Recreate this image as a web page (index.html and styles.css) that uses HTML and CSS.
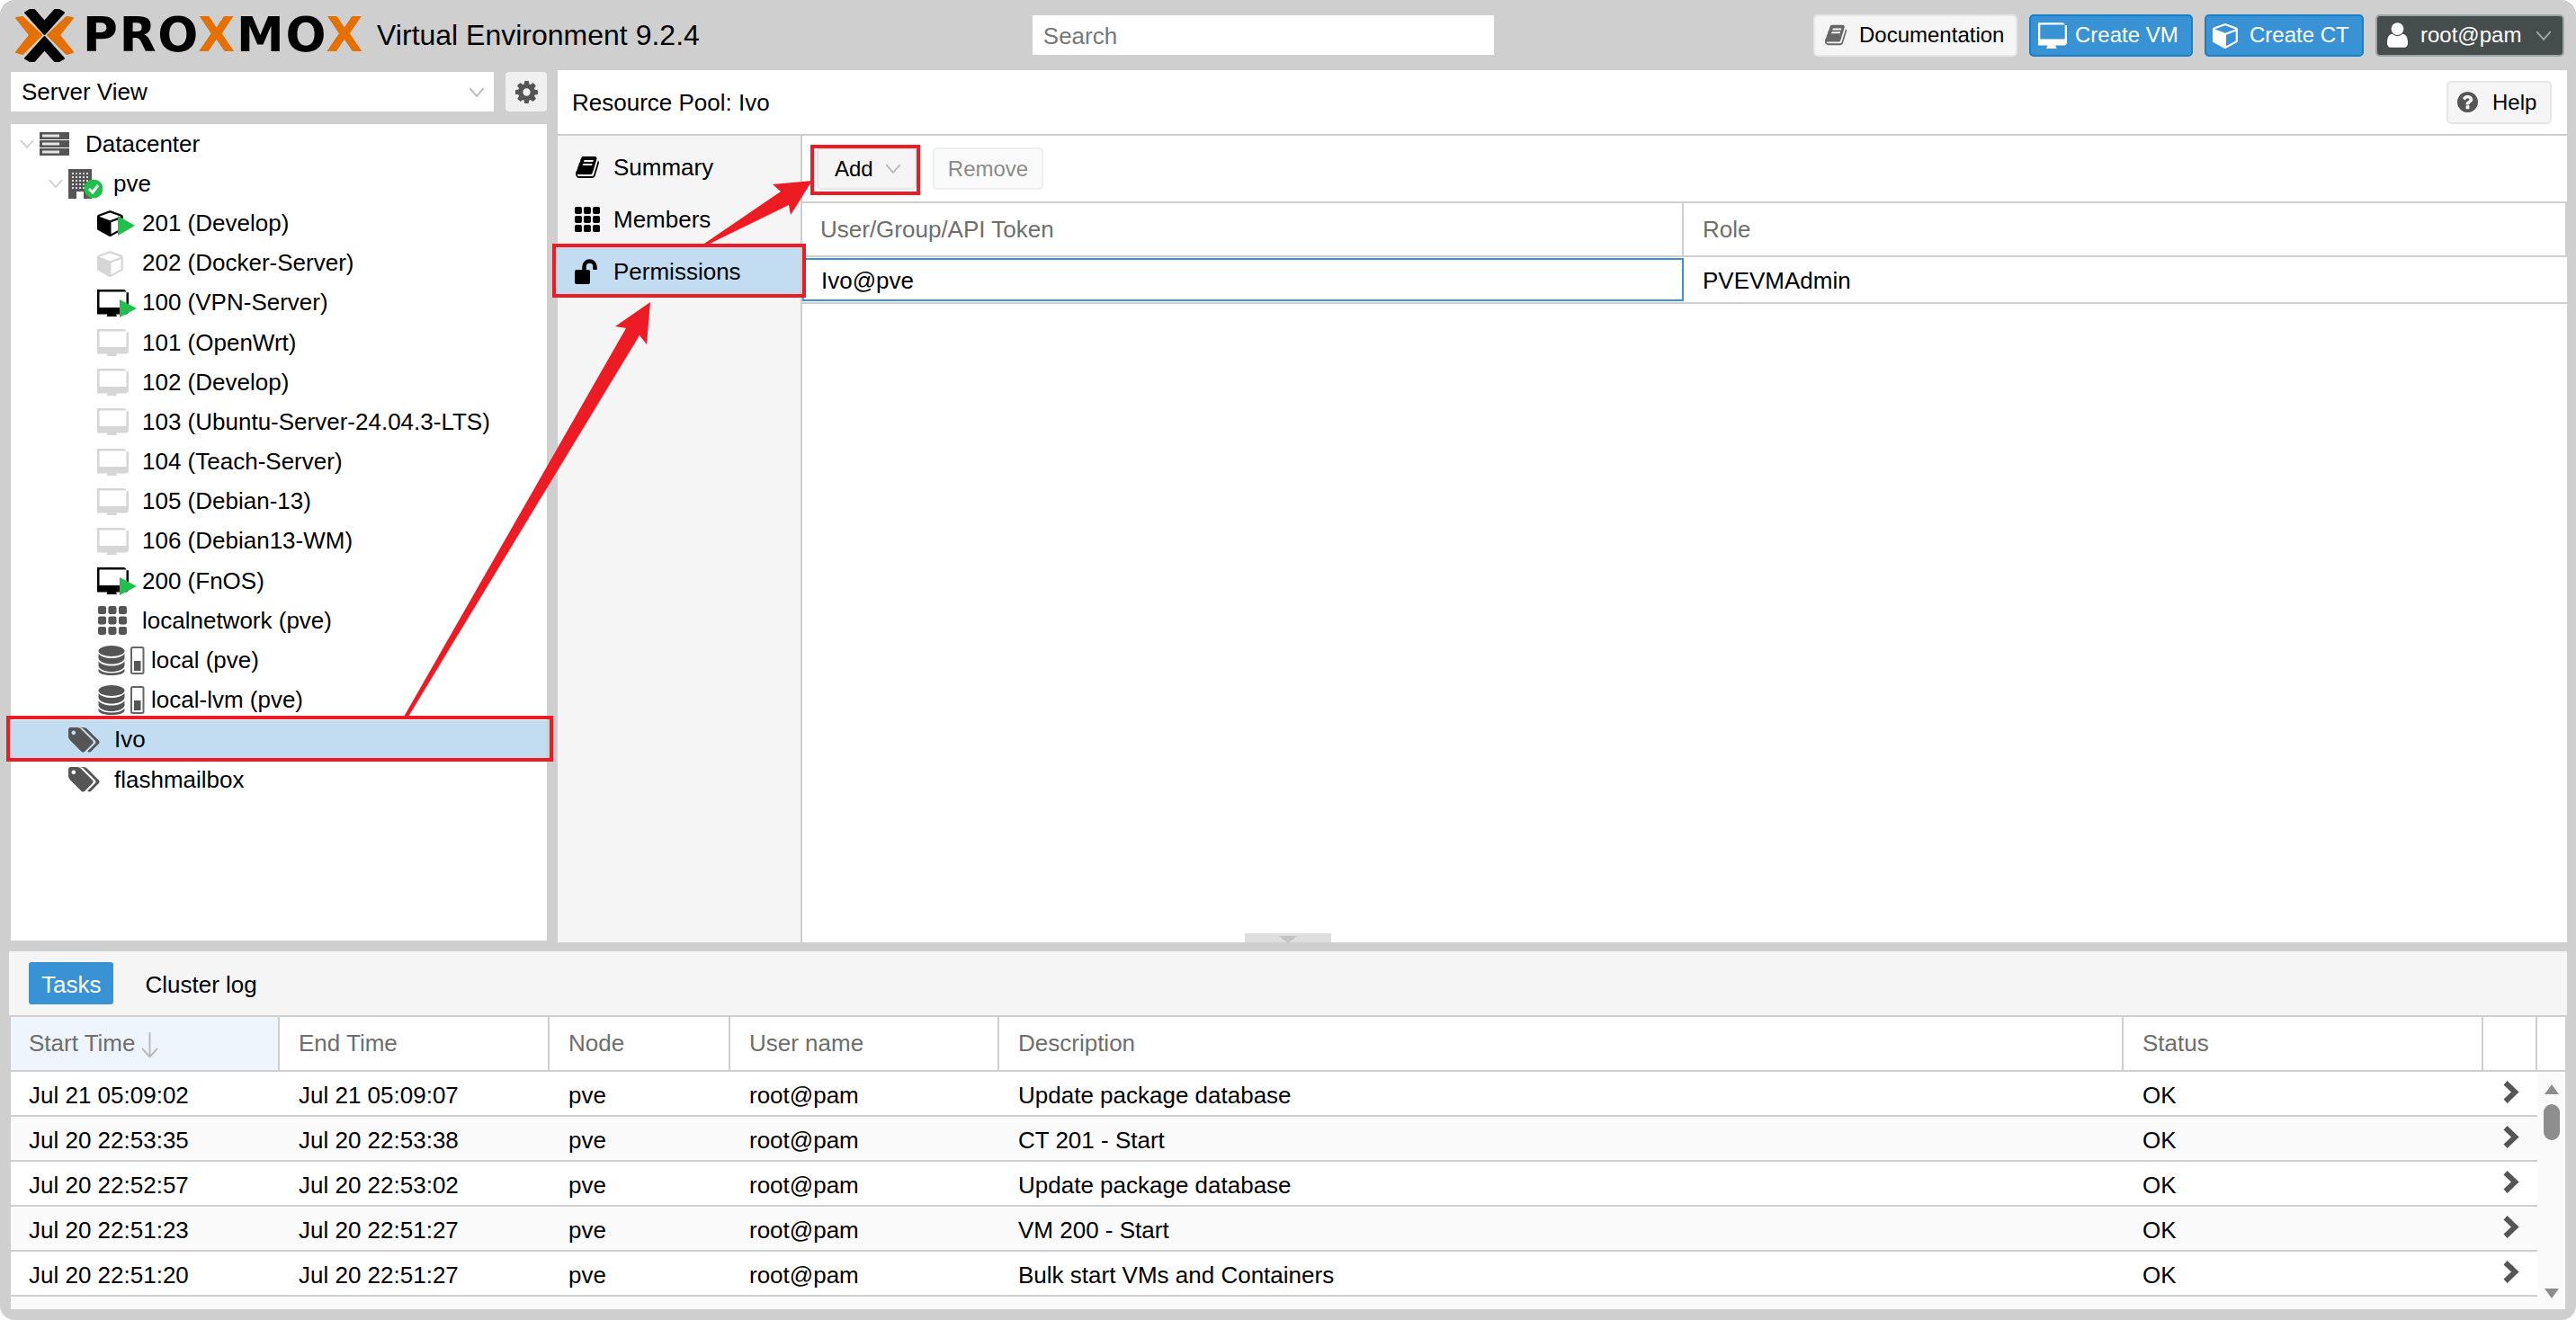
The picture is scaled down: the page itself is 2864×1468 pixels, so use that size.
FILE: index.html
```html
<!DOCTYPE html>
<html lang="en">
  <head>
    <meta charset="UTF-8" />
    <title>pve - Proxmox Virtual Environment</title>
    <link rel="stylesheet" href="styles.css">
  </head>
  <body>
    <!-- Shared icons -->
    <svg class="defs" width="0" height="0">
      <defs>
        <symbol id="i-cube" viewBox="0 0 1792 1792"><path fill="currentColor" d="M896 1629l640-349v-636l-640 233v752zm-64-865l698-254-698-254-698 254zm832-252v768q0 35-18 65t-49 47l-704 384q-28 16-61 16t-61-16l-704-384q-31-17-49-47t-18-65v-768q0-40 23-73t61-47l704-256q22-8 44-8t44 8l704 256q38 14 61 47t23 73z"/></symbol>
        <symbol id="i-desktop" viewBox="0 128 1792 1536"><path fill="currentColor" d="M1664 1120v-832q0-13-9.5-22.5t-22.5-9.5h-1472q-13 0-22.5 9.5t-9.5 22.5v832q0 13 9.5 22.5t22.5 9.5h1472q13 0 22.5-9.5t9.5-22.5zm128-832v1088q0 66-47 113t-113 47h-544q0 37 16 77.5t32 71 16 43.5q0 26-19 45t-45 19h-512q-26 0-45-19t-19-45q0-14 16-44t32-70 16-78h-544q-66 0-113-47t-47-113v-1088q0-66 47-113t113-47h1472q66 0 113 47t47 113z"/></symbol>
        <symbol id="i-book" viewBox="0 128 1792 1536"><path fill="currentColor" d="M1703 478q40 57 18 129l-275 906q-19 64-76.5 107.5t-122.5 43.5h-923q-77 0-148.5-53.5t-99.5-131.5q-24-67-2-127 0-4 3-27t4-37q1-8-3-21.5t-3-19.5q2-11 8-21t16.5-23.5 16.5-23.5q23-38 45-91.5t30-91.5q3-10 .5-30t-.5-28q3-11 17-28t17-23q21-36 42-92t25-90q1-9-2.5-32t.5-28q4-13 22-30.5t22-22.5q19-26 42.5-84.5t27.5-96.5q1-8-3-25.5t-2-26.5q2-8 9-18t18-23 17-21q8-12 16.5-30.5t15-35 16-36 19.5-32 26.5-23.5 36-11.5 47.5 5.5l-1 3q38-9 51-9h761q74 0 114 56t18 130l-274 906q-36 119-71.5 153.5t-128.5 34.5h-869q-27 0-38 15-11 16-1 43 24 70 144 70h923q29 0 56-15.5t35-41.5l300-987q7-22 5-57 38 15 59 43zm-1064 2q-4 13 2 22.5t20 9.5h608q13 0 25.5-9.5t16.5-22.5l21-64q4-13-2-22.5t-20-9.5h-608q-13 0-25.5 9.5t-16.5 22.5zm-83 256q-4 13 2 22.5t20 9.5h608q13 0 25.5-9.5t16.5-22.5l21-64q4-13-2-22.5t-20-9.5h-608q-13 0-25.5 9.5t-16.5 22.5z"/></symbol>
        <symbol id="i-tags" viewBox="0 128 1920 1536"><path fill="currentColor" d="M448 448q0-53-37.5-90.5t-90.5-37.5-90.5 37.5-37.5 90.5 37.5 90.5 90.5 37.5 90.5-37.5 37.5-90.5zm1067 576q0 53-37 90l-491 492q-39 37-91 37-53 0-90-37l-715-716q-38-37-64.5-101t-26.5-117v-416q0-52 38-90t90-38h416q53 0 117 26.5t102 64.5l715 714q37 39 37 91zm384 0q0 53-37 90l-491 492q-39 37-91 37-36 0-59-14t-53-45l470-470q37-37 37-90 0-52-37-91l-715-714q-38-38-102-64.5t-117-26.5h224q53 0 117 26.5t102 64.5l715 714q37 39 37 91z"/></symbol>
        <symbol id="i-grid" viewBox="0 0 30 30">
          <g fill="currentColor">
            <rect x="0" y="0" width="8.5" height="8.5" rx="2"/><rect x="10.7" y="0" width="8.5" height="8.5" rx="2"/><rect x="21.5" y="0" width="8.5" height="8.5" rx="2"/>
            <rect x="0" y="10.7" width="8.5" height="8.5" rx="2"/><rect x="10.7" y="10.7" width="8.5" height="8.5" rx="2"/><rect x="21.5" y="10.7" width="8.5" height="8.5" rx="2"/>
            <rect x="0" y="21.5" width="8.5" height="8.5" rx="2"/><rect x="10.7" y="21.5" width="8.5" height="8.5" rx="2"/><rect x="21.5" y="21.5" width="8.5" height="8.5" rx="2"/>
          </g>
        </symbol>
        <symbol id="i-storage" viewBox="0 0 52 33">
          <g fill="#555">
            <ellipse cx="15" cy="6" rx="14.5" ry="6"/>
            <path d="M.5 9c3 3.500 8 5 14.500 5s11.500-1.500 14.500-5v5c-1 4-7 6.500-14.500 6.500S1.500 18 .5 14z"/>
            <path d="M.5 18c3 3.500 8 5 14.500 5s11.500-1.500 14.500-5v5c-1 4-7 6.500-14.500 6.500S1.500 27 .5 23z" transform="translate(0 -.5)"/>
            <path d="M.5 26c3 3 8 4.500 14.500 4.500S26.500 29 29.500 26v2.500C28.500 31.500 22.500 33 15 33S1.500 31.500.5 28.500z"/>
          </g>
          <rect x="37" y="2" width="13.500" height="29" rx="1.500" fill="#fff" stroke="#666" stroke-width="2"/>
          <rect x="40" y="17" width="7.500" height="11" fill="#555"/>
        </symbol>
        <symbol id="i-chevron" viewBox="0 0 16 10"><polyline points="1,1 8,9 15,1" fill="none" stroke="currentColor" stroke-width="1.800"/></symbol>
        <symbol id="i-expand" viewBox="0 0 17 25"><polyline points="3,3 13,12.500 3,22" fill="none" stroke="#555" stroke-width="5.500"/></symbol>
      </defs>
    </svg>

    <div class="app">
      <header class="topbar">
        <svg class="logo-mark" viewBox="0 0 67 59">
          <g fill="#e57000" stroke="#e57000" stroke-width="2" stroke-linejoin="round">
            <polygon points="2,10 9,9 30,29 9,50 2,48 17,29"/>
            <polygon points="65,10 58,9 37,29 58,50 65,48 50,29"/>
          </g>
          <g fill="#000" stroke="#000" stroke-width="2" stroke-linejoin="round">
            <polygon points="12,4 17,1 22,1 33.500,14 45,1 50,1 55,4 33.500,28"/>
            <polygon points="12,55 17,58 22,58 33.500,45 45,58 50,58 55,55 33.500,31"/>
          </g>
        </svg>
        <div class="logo-word">PRO<span class="logo-x">X</span>MO<span class="logo-x">X</span></div>
        <div class="version">Virtual Environment 9.2.4</div>
        <div class="search">Search</div>
        <div class="top-actions">
          <div class="btn btn-light btn-doc"><svg class="ico-doc"><use href="#i-book"/></svg>Documentation</div>
          <div class="btn btn-blue btn-vm"><svg class="ico-vm"><use href="#i-desktop"/></svg>Create VM</div>
          <div class="btn btn-blue btn-ct"><svg class="ico-ct"><use href="#i-cube"/></svg>Create CT</div>
          <div class="btn btn-dark btn-user">
            <svg class="ico-user" viewBox="256 128 1280 1536"><path fill="currentColor" d="M1536 1399q0 109-62.500 187t-150.500 78h-854q-88 0-150.500-78t-62.500-187q0-85 8.500-160.500t31.500-152 58.500-131 94-89 134.500-34.500q131 128 313 128t313-128q76 0 134.500 34.500t94 89 58.500 131 31.500 152 8.500 160.500zm-256-887q0 159-112.500 271.500t-271.500 112.500-271.500-112.500-112.500-271.500 112.500-271.500 271.500-112.500 271.500 112.500 112.500 271.500z"/></svg>
            root@pam
            <svg class="ico-caret"><use href="#i-chevron"/></svg>
          </div>
        </div>
      </header>

      <div class="middle">
        <aside class="sidebar">
          <div class="view-row">
            <div class="combo">Server View<svg class="ico-caret"><use href="#i-chevron"/></svg></div>
            <div class="gear">
              <svg viewBox="128 128 1536 1536"><path fill="#555" d="M1152 896q0-106-75-181t-181-75-181 75-75 181 75 181 181 75 181-75 75-181zm512-109v222q0 12-8 23t-20 13l-185 28q-19 54-39 91 35 50 107 138 10 12 10 25t-9 23q-27 37-99 108t-94 71q-12 0-26-9l-138-108q-44 23-91 38-16 136-29 186-7 28-36 28h-222q-14 0-24.500-8.500t-11.500-21.500l-28-184q-49-16-90-37l-141 107q-10 9-25 9-14 0-25-11-126-114-165-168-7-10-7-23 0-12 8-23 15-21 51-66.500t54-70.500q-27-50-41-99l-183-27q-13-2-21-12.500t-8-23.500v-222q0-12 8-23t19-13l186-28q14-46 39-92-40-57-107-138-10-12-10-24 0-10 9-23 26-36 98.500-107.500t94.500-71.500q13 0 26 10l138 107q44-23 91-38 16-136 29-186 7-28 36-28h222q14 0 24.500 8.500t11.500 21.500l28 184q49 16 90 37l142-107q9-9 24-9 13 0 25 10 129 119 165 170 7 8 7 22 0 12-8 23-15 21-51 66.500t-54 70.500q26 50 41 98l183 28q13 2 21 12.500t8 23.500z"/></svg>
            </div>
          </div>
          <div class="tree">
            <div class="tree-row root-row">
              <svg class="tree-caret"><use href="#i-chevron"/></svg>
              <svg class="ico-server" viewBox="0 0 33 26">
                <g fill="#555">
                  <path d="M0 0h33v8H0zM0 9h33v8H0zM0 18h33v8H0z"/>
                </g>
                <g fill="#e4e4e4"><rect x="3" y="2.500" width="19" height="3"/><rect x="3" y="11.500" width="19" height="3"/><rect x="3" y="20.500" width="19" height="3"/></g>
              </svg>
              <span class="root-label">Datacenter</span>
            </div>
            <div class="tree-row node-row">
              <svg class="tree-caret"><use href="#i-chevron"/></svg>
              <svg class="ico-node" viewBox="0 0 38 33">
                <rect x="0" y="0" width="26" height="33" fill="#555"/>
                <path stroke="#ddd" stroke-width="2" stroke-dasharray="2 2" d="M4 5h18M4 9h18M4 13h18M4 17h18M4 21h14"/>
                <rect x="9" y="25" width="8" height="8" fill="#fff"/>
                <circle cx="28" cy="22" r="10.500" fill="#21bf4b"/>
                <polyline points="23,22 27,26 33,18" fill="none" stroke="#fff" stroke-width="3"/>
              </svg>
              <span>pve</span>
            </div>
            <div class="tree-row leaf-row">
              <svg class="ico-guest"><use class="on" href="#i-cube" width="31" height="31" y="1"/><polygon class="play" points="23,9 42,20 23,31"/></svg>
              <span>201 (Develop)</span>
            </div>
            <div class="tree-row leaf-row">
              <svg class="ico-guest"><use class="off" href="#i-cube" width="31" height="31" y="1"/></svg>
              <span>202 (Docker-Server)</span>
            </div>
            <div class="tree-row leaf-row">
              <svg class="ico-guest"><use class="on" href="#i-desktop" width="35" height="30" y="2"/><polygon class="play" points="25,13 44,23 25,33"/></svg>
              <span>100 (VPN-Server)</span>
            </div>
            <div class="tree-row leaf-row"><svg class="ico-guest"><use class="off" href="#i-desktop" width="35" height="30" y="2"/></svg><span>101 (OpenWrt)</span></div>
            <div class="tree-row leaf-row"><svg class="ico-guest"><use class="off" href="#i-desktop" width="35" height="30" y="2"/></svg><span>102 (Develop)</span></div>
            <div class="tree-row leaf-row"><svg class="ico-guest"><use class="off" href="#i-desktop" width="35" height="30" y="2"/></svg><span>103 (Ubuntu-Server-24.04.3-LTS)</span></div>
            <div class="tree-row leaf-row"><svg class="ico-guest"><use class="off" href="#i-desktop" width="35" height="30" y="2"/></svg><span>104 (Teach-Server)</span></div>
            <div class="tree-row leaf-row"><svg class="ico-guest"><use class="off" href="#i-desktop" width="35" height="30" y="2"/></svg><span>105 (Debian-13)</span></div>
            <div class="tree-row leaf-row"><svg class="ico-guest"><use class="off" href="#i-desktop" width="35" height="30" y="2"/></svg><span>106 (Debian13-WM)</span></div>
            <div class="tree-row leaf-row">
              <svg class="ico-guest"><use class="on" href="#i-desktop" width="35" height="30" y="2"/><polygon class="play" points="25,13 44,23 25,33"/></svg>
              <span>200 (FnOS)</span>
            </div>
            <div class="tree-row leaf-row">
              <svg class="ico-net"><use href="#i-grid"/></svg>
              <span>localnetwork (pve)</span>
            </div>
            <div class="tree-row storage-row"><svg class="ico-storage"><use href="#i-storage"/></svg><span>local (pve)</span></div>
            <div class="tree-row storage-row"><svg class="ico-storage"><use href="#i-storage"/></svg><span>local-lvm (pve)</span></div>
            <div class="tree-row pool-row selected"><svg class="ico-tags"><use href="#i-tags"/></svg><span>Ivo</span></div>
            <div class="tree-row pool-row"><svg class="ico-tags"><use href="#i-tags"/></svg><span>flashmailbox</span></div>
          </div>
        </aside>

        <main class="content">
          <div class="title-bar">
            <span class="pool-title">Resource Pool: Ivo</span>
            <div class="btn btn-light btn-help">
              <svg class="ico-help" viewBox="128 128 1536 1536"><path fill="#555" d="M1024 1376v-192q0-14-9-23t-23-9h-192q-14 0-23 9t-9 23v192q0 14 9 23t23 9h192q14 0 23-9t9-23zm256-672q0-88-55.500-163t-138.500-116-170-41q-243 0-371 213-15 24 8 42l132 100q7 6 19 6 16 0 25-12 53-68 86-92 34-24 86-24 48 0 85.500 26t37.500 59q0 38-20 61t-68 45q-63 28-115.500 86.500t-52.500 125.500v36q0 14 9 23t23 9h192q14 0 23-9t9-23q0-19 21.500-49.500t54.500-49.500q32-18 49-28.500t46-35 44.500-48 28-60.500 12.500-81zm384 192q0 209-103 385.500t-279.500 279.500-385.500 103-385.500-103-279.500-279.500-103-385.500 103-385.500 279.500-279.500 385.500-103 385.500 103 279.500 279.500 103 385.500z"/></svg>
              Help
            </div>
          </div>
          <div class="content-body">
            <nav class="tabs">
              <div class="tab"><svg class="ico-tab"><use href="#i-book"/></svg>Summary</div>
              <div class="tab"><svg class="ico-tab"><use href="#i-grid"/></svg>Members</div>
              <div class="tab active">
                <svg class="ico-tab" viewBox="0 0 28 28"><rect x="0" y="12" width="17" height="16" rx="2" fill="#000"/><path d="M10.500 13V8.500a6 6 0 0 1 12 0V12" fill="none" stroke="#000" stroke-width="4.500"/></svg>
                Permissions
              </div>
            </nav>
            <section class="perm-panel">
              <div class="perm-toolbar">
                <div class="btn btn-light btn-add">Add<svg class="ico-caret"><use href="#i-chevron"/></svg></div>
                <div class="btn btn-off">Remove</div>
              </div>
              <div class="perm-head">
                <div class="perm-col-a">User/Group/API Token</div>
                <div class="perm-col-b">Role</div>
              </div>
              <div class="perm-row">
                <div class="perm-col-a focused">Ivo@pve</div>
                <div class="perm-col-b">PVEVMAdmin</div>
              </div>
            </section>
          </div>
        </main>
        <div class="split-handle"><span class="split-arrow"></span></div>
      </div>

      <section class="log">
        <div class="log-toolbar">
          <div class="log-tab active">Tasks</div>
          <div class="log-tab">Cluster log</div>
        </div>
        <div class="log-head">
          <div class="cell sorted">Start Time
            <svg class="sort-arrow" viewBox="0 0 19 29"><path d="M9.500 0v27M1 18l8.500 9.500L18 18" fill="none" stroke="#bbb" stroke-width="2"/></svg>
          </div>
          <div class="cell">End Time</div>
          <div class="cell">Node</div>
          <div class="cell">User name</div>
          <div class="cell">Description</div>
          <div class="cell">Status</div>
          <div class="cell"></div>
          <div class="cell cell-scroll"></div>
        </div>
        <div class="log-body">
          <div class="log-rows">
            <div class="log-row">
              <div class="cell">Jul 21 05:09:02</div><div class="cell">Jul 21 05:09:07</div><div class="cell">pve</div><div class="cell">root@pam</div><div class="cell">Update package database</div><div class="cell">OK</div>
              <div class="cell"><svg class="ico-expand"><use href="#i-expand"/></svg></div>
            </div>
            <div class="log-row">
              <div class="cell">Jul 20 22:53:35</div><div class="cell">Jul 20 22:53:38</div><div class="cell">pve</div><div class="cell">root@pam</div><div class="cell">CT 201 - Start</div><div class="cell">OK</div>
              <div class="cell"><svg class="ico-expand"><use href="#i-expand"/></svg></div>
            </div>
            <div class="log-row">
              <div class="cell">Jul 20 22:52:57</div><div class="cell">Jul 20 22:53:02</div><div class="cell">pve</div><div class="cell">root@pam</div><div class="cell">Update package database</div><div class="cell">OK</div>
              <div class="cell"><svg class="ico-expand"><use href="#i-expand"/></svg></div>
            </div>
            <div class="log-row">
              <div class="cell">Jul 20 22:51:23</div><div class="cell">Jul 20 22:51:27</div><div class="cell">pve</div><div class="cell">root@pam</div><div class="cell">VM 200 - Start</div><div class="cell">OK</div>
              <div class="cell"><svg class="ico-expand"><use href="#i-expand"/></svg></div>
            </div>
            <div class="log-row">
              <div class="cell">Jul 20 22:51:20</div><div class="cell">Jul 20 22:51:27</div><div class="cell">pve</div><div class="cell">root@pam</div><div class="cell">Bulk start VMs and Containers</div><div class="cell">OK</div>
              <div class="cell"><svg class="ico-expand"><use href="#i-expand"/></svg></div>
            </div>
            <div class="log-row log-row-cut"></div>
          </div>
          <div class="scrollbar">
            <span class="scroll-up"></span>
            <span class="scroll-thumb"></span>
            <span class="scroll-down"></span>
          </div>
        </div>
      </section>

      <!-- Red annotations drawn over the screenshot -->
      <svg class="marks" viewBox="0 0 2864 1468">
        <g fill="none" stroke="#ed1c24" stroke-width="4">
          <rect x="9" y="798" width="604" height="47"/>
          <rect x="616" y="273" width="278" height="56"/>
          <rect x="903" y="163" width="118" height="52"/>
        </g>
        <g fill="#ed1c24">
          <polygon points="449,797 454,797 711,373 719,383 723,336 684,363 696,365"/>
          <polygon points="780,273 785,273 877,228 879,239 903,201 859,205 868,213"/>
        </g>
      </svg>
    </div>
  </body>
</html>
```

FILE: styles.css
```css
* {
  box-sizing: border-box;
}

html,
body {
  margin: 0;
  padding: 0;
  background-color: white;
}

body {
  font-family: "Liberation Sans", Arial, sans-serif;
  font-size: 26px;
  color: black;
  overflow: hidden;
}

.defs {
  position: absolute;
}

.app {
  position: relative;
  width: 2864px;
  height: 1468px;
  background-color: #cfcfcf;
  border-radius: 16px;
  overflow: hidden;
}

/* Top bar */
.topbar {
  display: flex;
  align-items: center;
  height: 78px;
  padding-left: 16px;
}

.logo-mark {
  width: 67px;
  height: 59px;
  flex: none;
}

.logo-word {
  margin-left: 9px;
  font-family: "DejaVu Sans", sans-serif;
  font-weight: bold;
  font-size: 53px;
  line-height: 78px;
  letter-spacing: 1.8px;
  white-space: nowrap;
}

.logo-x {
  color: #e57000;
}

.version {
  margin-left: 14px;
  font-size: 32px;
  white-space: nowrap;
}

.search {
  width: 513px;
  height: 44px;
  margin-left: 370px;
  padding-left: 12px;
  background-color: white;
  color: #777;
  line-height: 46px;
}

.top-actions {
  display: flex;
  align-items: center;
  gap: 13px;
  margin-left: auto;
  padding-right: 13px;
  font-size: 24px;
}

.btn {
  display: flex;
  align-items: center;
  height: 47px;
  border: 2px solid #e6e6e6;
  border-radius: 5px;
  font-size: 24px;
  white-space: nowrap;
}

.btn-light {
  background-color: #f5f5f5;
}

.btn-blue {
  background-color: #3892d4;
  border-color: #157fcc;
  color: white;
}

.btn-dark {
  background-color: #464d4d;
  border-color: #9aa5a5;
  color: white;
}

.btn-off {
  border-color: #eeeeee;
  background-color: #fafafa;
  color: #8a8a8a;
}

.btn-doc {
  width: 227px;
  padding-left: 10px;
}

.ico-doc {
  width: 26px;
  height: 26px;
  margin-right: 13px;
  color: #666;
}

.btn-vm {
  width: 182px;
  padding-left: 8px;
}

.ico-vm {
  width: 32px;
  height: 30px;
  margin-right: 9px;
}

.btn-ct {
  width: 177px;
  padding-left: 7px;
}

.ico-ct {
  width: 30px;
  height: 30px;
  margin-right: 11px;
}

.btn-user {
  width: 210px;
  padding-left: 11px;
}

.ico-user {
  width: 23px;
  height: 28px;
  margin-right: 14px;
}

.ico-caret {
  width: 18px;
  height: 11px;
  color: #bbb;
}

.btn-user .ico-caret {
  margin-left: 16px;
  color: #9aa5a5;
}

/* Sidebar and resource panel */
.middle {
  position: relative;
  display: flex;
  gap: 12px;
  height: 970px;
  padding: 0 10px 0 12px;
}

.sidebar {
  display: flex;
  flex-direction: column;
  gap: 14px;
  width: 596px;
  height: 968px;
  padding-top: 2px;
}

.view-row {
  display: flex;
  gap: 13px;
  height: 44px;
}

.combo {
  display: flex;
  align-items: center;
  justify-content: space-between;
  width: 538px;
  padding: 0 10px 0 12px;
  background-color: white;
}

.gear {
  display: flex;
  align-items: center;
  justify-content: center;
  width: 46px;
  background-color: #f0f0f0;
  border-radius: 4px;
}

.gear svg {
  width: 25px;
  height: 25px;
}

.tree {
  flex: 1;
  background-color: white;
}

.tree-row {
  display: flex;
  align-items: center;
  height: 44.2px;
  white-space: nowrap;
}

.tree-row.selected {
  background-color: #c2dcf1;
}

.tree-caret {
  width: 16px;
  height: 10px;
  color: #cccccc;
}

.root-row {
  padding-left: 10px;
}

.ico-server {
  width: 33px;
  height: 26px;
  margin-left: 6px;
}

.root-label {
  margin-left: 18px;
}

.node-row {
  padding-left: 42px;
}

.ico-node {
  width: 38px;
  height: 33px;
  margin-left: 6px;
}

.node-row span {
  margin-left: 12px;
}

.leaf-row {
  padding-left: 96px;
}

.ico-guest {
  width: 46px;
  height: 34px;
  margin-right: 4px;
  flex: none;
}

.on {
  color: black;
}

.off {
  color: #d6d6d6;
}

.play {
  fill: #21bf4b;
}

.ico-net {
  width: 34px;
  height: 32px;
  margin-right: 16px;
  color: #555;
}

.storage-row {
  padding-left: 97px;
}

.ico-storage {
  width: 52px;
  height: 33px;
  margin-right: 7px;
}

.pool-row {
  padding-left: 64px;
}

.ico-tags {
  width: 35px;
  height: 28px;
  margin-right: 16px;
  color: #555;
}

.content {
  display: flex;
  flex-direction: column;
  flex: 1;
  background-color: white;
}

.title-bar {
  display: flex;
  align-items: center;
  justify-content: space-between;
  height: 73px;
  padding: 0 17px 0 16px;
  border-bottom: 2px solid #cfcfcf;
}

.pool-title {
  padding-top: 2px;
}

.btn-help {
  width: 117px;
  height: 48px;
  padding-left: 10px;
}

.ico-help {
  width: 23px;
  height: 23px;
  margin-right: 16px;
}

.content-body {
  display: flex;
  flex: 1;
}

.tabs {
  width: 272px;
  padding-top: 6px;
  background-color: #f5f5f5;
  border-right: 2px solid #cfcfcf;
}

.tab {
  display: flex;
  align-items: center;
  height: 58px;
  padding-left: 19px;
}

.tab.active {
  background-color: #c2dcf1;
}

.ico-tab {
  width: 28px;
  height: 28px;
  margin-right: 15px;
  flex: none;
}

.perm-panel {
  flex: 1;
}

.perm-toolbar {
  display: flex;
  align-items: center;
  gap: 18px;
  height: 75px;
  padding: 0 16px;
  border-bottom: 2px solid #cfcfcf;
}

.btn-add {
  width: 111px;
  padding-left: 18px;
}

.btn-add .ico-caret {
  margin-left: 13px;
}

.btn-off {
  width: 123px;
  justify-content: center;
}

.perm-head,
.perm-row {
  display: flex;
  align-items: center;
}

.perm-head {
  height: 60px;
  border-bottom: 2px solid #cfcfcf;
  color: #6e6e6e;
}

.perm-head div {
  height: 100%;
  line-height: 58px;
  border-right: 2px solid #cfcfcf;
}

.perm-row {
  height: 52px;
  border-bottom: 2px solid #cfcfcf;
}

.perm-col-a {
  width: 980px;
  padding-left: 20px;
}

.perm-col-b {
  flex: 1;
  padding-left: 21px;
}

.perm-row .perm-col-b {
  padding-top: 3px;
}

.focused {
  height: 48px;
  padding-left: 19px;
  line-height: 47px;
  border: 2px solid #3892d4;
}

.split-handle {
  position: absolute;
  left: 1384px;
  bottom: 0;
  display: flex;
  justify-content: center;
  width: 96px;
  height: 10px;
  background-color: #dedede;
}

.split-arrow {
  width: 0;
  height: 0;
  border-left: 10px solid transparent;
  border-right: 10px solid transparent;
  border-top: 8px solid #c4c4c4;
  margin-top: 3px;
}

/* Task log */
.log {
  height: 398px;
  margin: 10px 10px 0;
}

.log-toolbar {
  display: flex;
  align-items: center;
  gap: 21px;
  height: 73px;
  padding-left: 22px;
  background-color: #f5f5f5;
  border-bottom: 2px solid #cfcfcf;
}

.log-tab {
  height: 47px;
  padding: 0 14px;
  line-height: 50px;
  border-radius: 3px;
}

.log-head,
.log-row {
  display: grid;
  grid-template-columns: 299px 300px 201px 299px 1250px 400px 60px;
}

.log-tab.active {
  background-color: #3892d4;
  color: white;
}

.log-head {
  grid-template-columns: 299px 300px 201px 299px 1250px 400px 60px 31px;
  width: 2840px;
  height: 61px;
  margin-left: 2px;
  background-color: white;
  border-bottom: 2px solid #cfcfcf;
  color: #6e6e6e;
}

.log-head .cell {
  display: flex;
  align-items: center;
  height: 59px;
  border-right: 2px solid #cfcfcf;
}

.log-head .cell-scroll {
  border-right: none;
}

.log-head .sorted {
  background-color: #eef5fc;
}

.sort-arrow {
  width: 19px;
  height: 29px;
  margin-left: 7px;
  margin-top: 4px;
}

.cell {
  padding-left: 21px;
  white-space: nowrap;
  overflow: hidden;
}

.cell:first-child {
  padding-left: 20px;
}

.log-body {
  display: flex;
  width: 2840px;
  height: 264px;
  margin-left: 2px;
  overflow: hidden;
}

.log-rows {
  width: 2809px;
}

.log-row {
  height: 50px;
  padding-top: 3px;
  line-height: 47px;
  background-color: white;
  border-bottom: 2px solid #cfcfcf;
}

.log-row:nth-child(even) {
  background-color: #fafafa;
}

.log-row-cut {
  height: 15px;
  border-bottom: none;
}

.ico-expand {
  display: block;
  width: 19px;
  height: 27px;
  margin: 6px 0 0 0;
}

.scrollbar {
  position: relative;
  width: 31px;
  background-color: #fafafa;
}

.scroll-up,
.scroll-down {
  position: absolute;
  left: 8px;
  width: 0;
  height: 0;
  border-left: 8px solid transparent;
  border-right: 8px solid transparent;
}

.scroll-up {
  top: 14px;
  border-bottom: 11px solid #8e8e8e;
}

.scroll-down {
  top: 241px;
  border-top: 11px solid #8e8e8e;
}

.scroll-thumb {
  position: absolute;
  top: 36px;
  left: 7px;
  width: 18px;
  height: 40px;
  background-color: #8e8e8e;
  border-radius: 9px;
}

.marks {
  position: absolute;
  top: 0;
  left: 0;
  width: 2864px;
  height: 1468px;
  pointer-events: none;
}
```
